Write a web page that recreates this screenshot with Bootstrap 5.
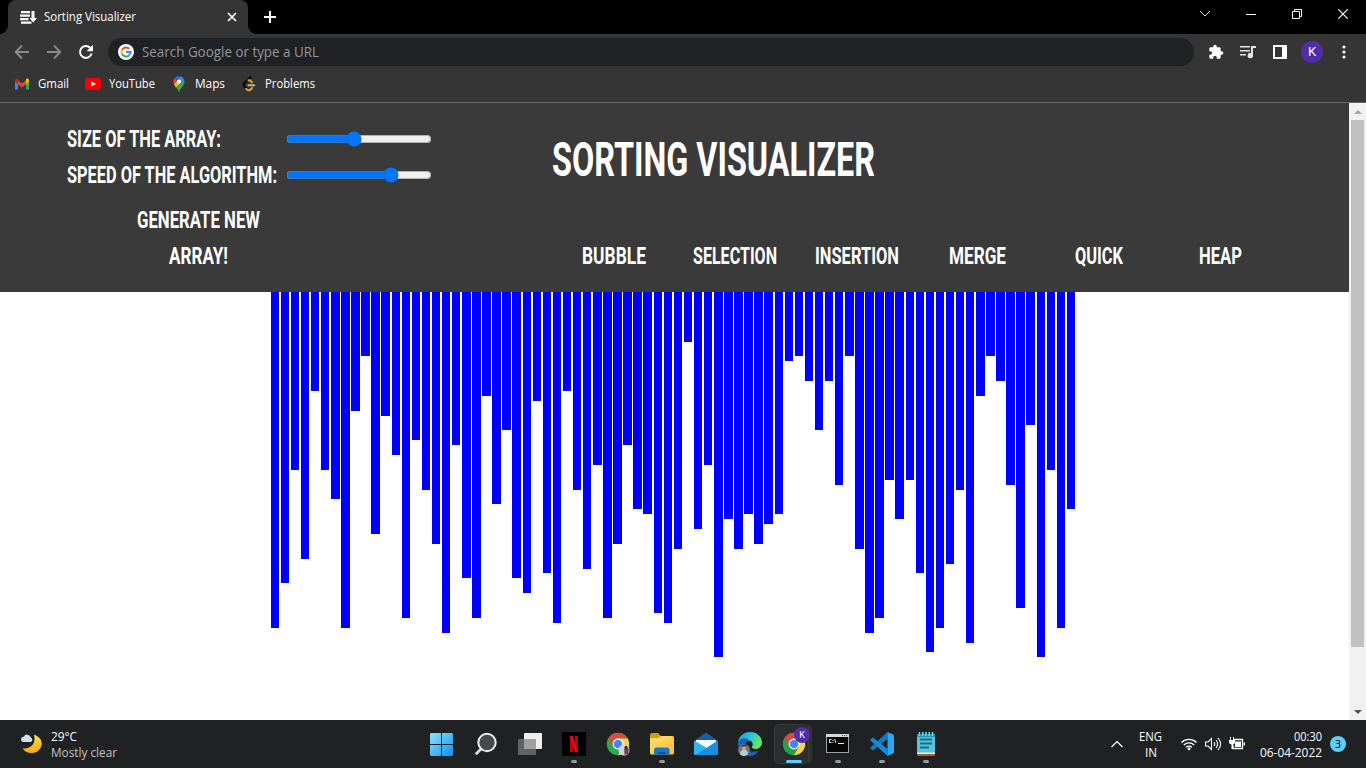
<!DOCTYPE html>
<html lang="en">
<head>
<meta charset="utf-8">
<title>Sorting Visualizer</title>
<link href="https://cdn.jsdelivr.net/npm/bootstrap@5.3.0/dist/css/bootstrap.min.css" rel="stylesheet">
<style>
  body { width: 1366px; height: 768px; overflow: hidden; font-family: "Open Sans", "Noto Sans", sans-serif; font-size: 12px; line-height: 16px; color: #fff; }
  svg { display: block; flex: none; }
  .fit { display: inline-block; white-space: nowrap; transform-origin: 0 50%; }
  .titlebar { height: 34px; background: #000; }
  .browser-tab { width: 240px; height: 34px; margin-left: 8px; padding: 0 11px 0 12px; background: #353535; border-radius: 8px 8px 0 0; }
  .browser-tab::before, .browser-tab::after { content: ""; position: absolute; bottom: 0; width: 8px; height: 8px; }
  .browser-tab::before { left: -8px; background: radial-gradient(circle at 0 0, #000 7.5px, #353535 8px); }
  .browser-tab::after { right: -8px; background: radial-gradient(circle at 100% 0, #000 7.5px, #353535 8px); }
  .tab-name { padding-left: 7px; }
  .win-btn { width: 46px; height: 28px; }
  .toolbar { height: 36px; background: #353535; padding: 0 6px; }
  .tool { width: 32px; height: 32px; }
  .omnibox { height: 28px; border-radius: 14px; background: #202124; margin: 0 6px; padding-left: 10px; color: #93979b; font-size: 14px; line-height: 20px; }
  .bookmarks { height: 33px; background: #353535; border-bottom: 1px solid #676767; padding: 0 0 4px 14px; gap: 16px; }
  .bookmark svg { margin-right: 8px; }
  .avatar { width: 22px; height: 22px; background: #512da8; font-family: Roboto, sans-serif; font-size: 13px; }
  .viewport { height: 617px; background: #fff; }
  .page-head { height: 189px; background: #3a3a3a; font-family: Roboto, sans-serif; font-weight: 700; font-size: 24.5px; line-height: 36px; }
  .controls { width: 552px; padding: 18px 0 0 66.5px; }
  .controls .fit, .algos .fit { translate: 0 -.4px; }
  .control-label { width: 219.5px; }
  .controls input { width: 146px; height: 16px; margin: 0; }
  .generate { width: 263px; margin-top: 9px; }
  .page-title { font-size: 48px; line-height: 60px; font-weight: 700; margin: 27px 0 0; }
  .algos { margin-top: 48px; padding-left: 1px; }
  .algo { width: 121.41px; }
  .bars { gap: 1.609375px; padding-left: 270.59375px; }
  .bar-item { flex: none; width: 8.46875px; background: #00f; }
  .scroller { width: 17px; background: #f1f1f1; }
  .thumb { width: 13px; height: 527px; background: #c1c1c1; }
  .arrow-cell { height: 17px; }
  .taskbar { height: 48px; background: #202122; }
  .taskbar .fit { translate: 0 1px; }
  .weather { width: 420px; padding-left: 20px; }
  .weather-text { margin-left: 7px; }
  .soft { color: #c4c4c4; }
  .app { width: 44px; height: 48px; }
  .app::after { content: ""; position: absolute; left: 19px; top: 40px; width: 6px; height: 3px; border-radius: 2px; background: transparent; }
  .app.running::after { background: #9b9b9b; }
  .app.active::after { left: 14px; width: 16px; background: #60cdff; }
  .app.active::before { content: ""; position: absolute; left: 2px; top: 4px; width: 35px; height: 40px; border-radius: 5px; background: #2c2d2e; border: 1px solid #393a3b; box-shadow: 4px 0 0 -1px #303132; }
  .app svg { position: relative; z-index: 1; }
  .app-badge { z-index: 2; left: 22px; top: 7px; width: 16px; height: 16px; background: #512da8; font: 9px/16px Roboto, sans-serif; text-align: center; }
  .tray { padding-right: 20px; }
  .lang { margin: 0 19px 0 16px; }
  .clock { margin: 0 8px 0 15px; }
  .note-count { width: 16px; height: 16px; background: #60cdff; color: #000; font-size: 10.5px; }
</style>
</head>
<body class="d-flex flex-column">

<div class="titlebar d-flex align-items-start">
  <div class="browser-tab d-flex align-items-center position-relative">
    <svg width="17" height="15" viewBox="0 0 17 15" fill="#fff"><path d="M1 1h9v2.300H1zM0 4.500h10v2.300H0zM0 8h8.500v2.300H0zM1 11.500h10.500v2.300H1zM11.500 1h3v7H17l-3.800 4.500L9.500 8h2z"/></svg>
    <span class="tab-name"><span class="fit" data-w="92">Sorting Visualizer</span></span>
    <svg class="ms-auto" width="10" height="10" viewBox="0 0 10 10" stroke="#fff" stroke-width="1.700"><path d="M1 1l8 8M9 1L1 9"/></svg>
  </div>
  <svg class="ms-3 mt-1" width="12" height="26" viewBox="0 0 12 26" stroke="#fff" stroke-width="2"><path d="M6 7v12M0 13h12"/></svg>
  <div class="d-flex ms-auto">
    <div class="win-btn d-flex align-items-center justify-content-center"><svg width="12" height="8" viewBox="0 0 12 8" fill="none" stroke="#ddd"><path d="M1 1l5 5 5-5"/></svg></div>
    <div class="win-btn d-flex align-items-center justify-content-center"><svg width="10" height="10" viewBox="0 0 10 10" stroke="#fff"><path d="M0 5.500h10"/></svg></div>
    <div class="win-btn d-flex align-items-center justify-content-center"><svg width="10" height="10" viewBox="0 0 10 10" fill="none" stroke="#fff"><path d="M.5 2.500h7v7h-7zM2.500 2.500v-2h7v7h-2"/></svg></div>
    <div class="win-btn d-flex align-items-center justify-content-center"><svg width="10" height="10" viewBox="0 0 10 10" stroke="#fff" stroke-width="1.200"><path d="M.3.3l9.400 9.400M9.700.3L.3 9.700"/></svg></div>
  </div>
</div>

<div class="toolbar d-flex align-items-center">
  <div class="tool d-flex align-items-center justify-content-center"><svg width="16" height="16" viewBox="0 0 16 16" fill="none" stroke="#8b8b8b" stroke-width="1.800"><path d="M15 8H2M8 1.500L1.700 8 8 14.500"/></svg></div>
  <div class="tool d-flex align-items-center justify-content-center"><svg width="16" height="16" viewBox="0 0 16 16" fill="none" stroke="#8b8b8b" stroke-width="1.800"><path d="M1 8h13M8 1.500L14.300 8 8 14.500"/></svg></div>
  <div class="tool d-flex align-items-center justify-content-center"><svg width="16" height="16" viewBox="0 0 16 16"><path d="M13.600 9.500A5.900 5.900 0 1 1 12.300 4" fill="none" stroke="#fff" stroke-width="2"/><path d="M15 .8v6.400H8.600z" fill="#fff"/></svg></div>
  <div class="omnibox d-flex align-items-center flex-grow-1">
    <svg class="me-2" width="16" height="16" viewBox="0 0 16 16"><circle cx="8" cy="8" r="8" fill="#fff"/><g fill="none" stroke-width="2"><path d="M11.200 4.800A4.600 4.600 0 0 0 4 5.900" stroke="#ea4335"/><path d="M4 5.900a4.600 4.600 0 0 0 0 4.200" stroke="#fbbc05"/><path d="M4 10.100a4.600 4.600 0 0 0 7 1.300" stroke="#34a853"/><path d="M11 11.400A4.500 4.500 0 0 0 12.600 8H8" stroke="#4285f4"/></g></svg>
    <span class="fit" data-w="177">Search Google or type a URL</span>
  </div>
  <div class="tool d-flex align-items-center justify-content-center"><svg width="16" height="16" viewBox="0 0 24 24" fill="#fff"><path d="M20.500 11H19V7c0-1.100-.9-2-2-2h-4V3.500a2.500 2.500 0 0 0-5 0V5H4c-1.100 0-2 .9-2 2v3.800h1.500a2.700 2.700 0 0 1 0 5.400H2V20c0 1.100.9 2 2 2h3.800v-1.500a2.700 2.700 0 0 1 5.400 0V22H17c1.100 0 2-.9 2-2v-4h1.500a2.500 2.500 0 0 0 0-5z"/></svg></div>
  <div class="tool d-flex align-items-center justify-content-center"><svg width="18" height="14" viewBox="0 0 18 14" fill="#e4e4e4"><path d="M1 1h10v1.600H1zM1 5h10v1.600H1zM1 9h6v1.600H1zM12 1h5v2h-3v7.500a2.700 2.700 0 1 1-2-2.500z"/></svg></div>
  <div class="tool d-flex align-items-center justify-content-center"><svg width="14" height="14" viewBox="0 0 14 14" fill="#fff" fill-rule="evenodd"><path d="M0 0h14v14H0zM2 2v10h7V2z"/></svg></div>
  <div class="tool d-flex align-items-center justify-content-center"><div class="avatar rounded-circle d-flex align-items-center justify-content-center">K</div></div>
  <div class="tool d-flex align-items-center justify-content-center"><svg width="4" height="14" viewBox="0 0 4 14" fill="#fff"><circle cx="2" cy="2" r="1.600"/><circle cx="2" cy="7" r="1.600"/><circle cx="2" cy="12" r="1.600"/></svg></div>
</div>

<div class="bookmarks d-flex align-items-center">
  <div class="bookmark d-flex align-items-center"><svg width="16" height="12" viewBox="0 0 16 12"><path d="M1 2v9.500h3V5z" fill="#4285f4"/><path d="M15 2v9.500h-3V5z" fill="#34a853"/><path d="M4 2.300l4 3.200 4-3.200v4L8 9.500 4 6.300z" fill="#ea4335"/><path d="M1 2.500C1 .6 2.800 0 4 1v5.300L1 4z" fill="#c5221f"/><path d="M15 2.500C15 .6 13.200 0 12 1v5.300L15 4z" fill="#fbbc04"/></svg><span class="fit" data-w="31">Gmail</span></div>
  <div class="bookmark d-flex align-items-center"><svg width="16" height="12" viewBox="0 0 16 12"><rect width="16" height="12" rx="3" fill="#f00"/><path d="M6.300 3.400v5.200L11 6z" fill="#fff"/></svg><span class="fit" data-w="46">YouTube</span></div>
  <div class="bookmark d-flex align-items-center"><svg width="16" height="16" viewBox="0 0 16 16"><path d="M8 0a5.500 5.500 0 0 0-4.300 2L6 4l3.800-3.700A6 6 0 0 0 8 0z" fill="#1a73e8"/><path d="M3.700 2A5.400 5.400 0 0 0 3 8.200L6 5z" fill="#ea4335"/><path d="M9.800.3A5.500 5.500 0 0 1 13.200 4L5 12 3 8.200 6.500 4z" fill="#4285f4"/><path d="M3 8.200L5 11.500 10 6 8 4z" fill="#fbbc04"/><path d="M13.200 4c.6 2 .2 4-1 5.500C10 12.400 9 13 8.500 15.500c-.2.600-.8.600-1 0-.4-1.700-1-2.600-2.500-4z" fill="#34a853"/><circle cx="8" cy="5.500" r="2.100" fill="#fff"/></svg><span class="fit" data-w="30">Maps</span></div>
  <div class="bookmark d-flex align-items-center"><svg width="16" height="16" viewBox="0 0 16 16" fill="none" stroke-width="2" stroke-linecap="round"><path d="M6.500 13.500L3.200 10.300c-.8-.9-.8-2 0-2.900L9.500 1.200" stroke="#070706"/><path d="M7.500 4.300l1.500.2 2 1.700M5.300 12.900c1.300 1.800 3.600 1.600 4.700.3l1.200-1.300" stroke="#f2a12b"/><path d="M7.500 9.200h5.700" stroke="#b8b8b8"/></svg><span class="fit" data-w="50">Problems</span></div>
</div>

<div class="viewport d-flex">
  <main class="flex-grow-1">
    <header class="page-head d-flex">
      <div class="controls">
        <label class="d-flex align-items-center"><span class="control-label"><span class="fit" data-w="154">SIZE OF THE ARRAY:</span></span><input type="range" min="0" max="1000" value="461"></label>
        <label class="d-flex align-items-center"><span class="control-label"><span class="fit" data-w="210">SPEED OF THE ALGORITHM:</span></span><input type="range" min="0" max="1000" value="746"></label>
        <div class="generate d-flex flex-column align-items-center"><span class="fit" data-w="123">GENERATE NEW</span><span class="fit" data-w="59">ARRAY!</span></div>
      </div>
      <div>
        <h1 class="page-title"><span class="fit" data-w="323">SORTING VISUALIZER</span></h1>
        <nav class="algos d-flex text-center">
          <div class="algo"><span class="fit" data-w="64">BUBBLE</span></div>
          <div class="algo"><span class="fit" data-w="84">SELECTION</span></div>
          <div class="algo"><span class="fit" data-w="84">INSERTION</span></div>
          <div class="algo"><span class="fit" data-w="57">MERGE</span></div>
          <div class="algo"><span class="fit" data-w="48">QUICK</span></div>
          <div class="algo"><span class="fit" data-w="43">HEAP</span></div>
        </nav>
      </div>
    </header>
    <div class="bars d-flex align-items-start" id="bars"></div>
  </main>
  <div class="scroller d-flex flex-column align-items-center">
    <div class="arrow-cell d-flex align-items-center"><svg width="8" height="4" viewBox="0 0 8 4" fill="#a3a3a3"><path d="M0 4l4-4 4 4z"/></svg></div>
    <div class="thumb"></div>
    <div class="arrow-cell d-flex align-items-center mt-auto"><svg width="8" height="4" viewBox="0 0 8 4" fill="#505050"><path d="M0 0l4 4 4-4z"/></svg></div>
  </div>
</div>

<footer class="taskbar d-flex align-items-center">
  <div class="weather d-flex align-items-center">
    <svg width="24" height="24" viewBox="0 0 24 24"><defs><linearGradient id="moon" x1="0" y1="0" x2="0" y2="1"><stop offset="0" stop-color="#ffe14a"/><stop offset="1" stop-color="#f9a818"/></linearGradient></defs><path d="M14 2.500c9 3 10 12 4 16.500-5 3.500-12 2.500-15.500-2.500 8 1 14-5 11.500-14z" fill="url(#moon)"/><path d="M3.500 10a2.600 2.600 0 0 1 .3-5.200 3.700 3.700 0 0 1 7 .8A2.300 2.300 0 0 1 10.500 10z" fill="#d5e3f0"/></svg>
    <div class="weather-text d-flex flex-column align-items-start"><span class="fit" data-w="26">29°C</span><span class="fit soft" data-w="66">Mostly clear</span></div>
  </div>

  <div class="app position-relative d-flex align-items-center justify-content-center"><svg width="24" height="24" viewBox="0 0 24 24"><defs><linearGradient id="win" x1="0" y1="0" x2="1" y2="1"><stop offset="0" stop-color="#8fe2ff"/><stop offset="1" stop-color="#0a92ef"/></linearGradient></defs><path d="M1 1h10v11H0V2zM12 1h10l1 1v10H12zM0 13h11v11H1l-1-1zM12 13h11v10l-1 1H12z" fill="url(#win)"/></svg></div>
  <div class="app position-relative d-flex align-items-center justify-content-center"><svg width="24" height="24" viewBox="0 0 24 24"><path d="M7.500 16.500L2.500 21.500" stroke="#ddd" stroke-width="2.800" stroke-linecap="round"/><circle cx="13" cy="10.500" r="8.700" fill="#47494b" stroke="#f0f0f0" stroke-width="2"/></svg></div>
  <div class="app position-relative d-flex align-items-center justify-content-center"><svg width="24" height="24" viewBox="0 0 24 24"><rect x="6" y="1" width="18" height="16" rx="1" fill="#eee"/><rect x="0" y="7" width="18" height="16" rx="1" fill="#626262"/><path d="M6 7h12v10H6z" fill="#a0a0a0"/></svg></div>
  <div class="app running position-relative d-flex align-items-center justify-content-center"><svg width="24" height="24" viewBox="0 0 24 24"><path d="M0 0h24v24H0z" fill="#000"/><path d="M8 4h3v16l-3 .4zM13 4h3v16.400l-3-.4z" fill="#b20710"/><path d="M8 4h3l5 16.400-3-.4z" fill="#e50914"/></svg></div>
  <div class="app position-relative d-flex align-items-center justify-content-center"><svg width="24" height="24" viewBox="0 0 24 24"><circle cx="12" cy="12" r="11.200" fill="#2da94f"/><path d="M12 .8A11.200 11.200 0 0 0 2.300 6.400L7.200 14.800 12 6.500h9.700A11.200 11.200 0 0 0 12 .8z" fill="#d94a3f"/><path d="M21.700 6.500H12l4.900 8.300-4.900 8.400a11.200 11.200 0 0 0 9.700-16.700z" fill="#fbcf4b"/><circle cx="12" cy="12" r="5.400" fill="#fff"/><circle cx="12" cy="12" r="4.300" fill="#4285f4"/><circle cx="18" cy="18" r="5.500" fill="#cfdadb"/><path d="M18.500 23c0-4-1-6 1-8l3.500 2-1 5z" fill="#7a3c42"/><circle cx="20" cy="15.300" r="1.500" fill="#292225"/></svg></div>
  <div class="app running position-relative d-flex align-items-center justify-content-center"><svg width="24" height="24" viewBox="0 0 24 24"><defs><linearGradient id="folder" x1="0" y1="0" x2="1" y2="1"><stop offset="0" stop-color="#ffe075"/><stop offset="1" stop-color="#fcbd2e"/></linearGradient></defs><path d="M0 3q0-2 2-2h6l3 3h11q2 0 2 2v4H0z" fill="#d69b0f"/><path d="M0 6h8l3-2h11q2 0 2 2v15q0 1.500-1.500 1.500h-21Q0 22.500 0 21z" fill="url(#folder)"/><path d="M4 22.500V18q0-2.500 2.500-2.500h10.500q2.500 0 2.500 2.500v4.500z" fill="#1478ca"/><path d="M8 20h8v2.500H8z" fill="#0b5aa5"/></svg></div>
  <div class="app position-relative d-flex align-items-center justify-content-center"><svg width="24" height="24" viewBox="0 0 24 24"><path d="M0 9L12 .5 24 9v5H0z" fill="#1260ad"/><path d="M2 8h20v9H2z" fill="#f4f6f8"/><path d="M0 8.500l13 7.500L24 8.500V22q0 1-1 1H1q-1 0-1-1z" fill="#2fb7f0"/><path d="M24 8.500L11 17 1 23h22q1 0 1-1z" fill="#1690de"/></svg></div>
  <div class="app position-relative d-flex align-items-center justify-content-center"><svg width="24" height="24" viewBox="0 0 24 24"><defs><linearGradient id="edge" x1="0" y1="0" x2="1" y2=".4"><stop offset="0" stop-color="#1d9be9"/><stop offset=".55" stop-color="#2cc4d8"/><stop offset="1" stop-color="#6be557"/></linearGradient></defs><path d="M0 10C1 4 6 0 12 0c7 0 12 5 12 10.500 0 4-3 6.500-6.500 6.500-2.500 0-4-1-3.500-2.500 1.500-1.500 1-6-3.500-6C6 8.500 3 12 3 16 1 14 0 12.500 0 10z" fill="url(#edge)"/><path d="M0 10c2-4 8-5 11.500-1.500C8 9 7 12 8 15c1.500 4.500 7 6 13 3.500-2 3.500-5.500 5.500-9 5.500C5 24 0 18 0 10z" fill="#1564b8"/><circle cx="6" cy="18" r="6" fill="#70747a"/><circle cx="6" cy="15.800" r="2.200" fill="#c69b86"/><path d="M2 22c0-6 8-6 8 0-2 2.500-6 2.500-8 0z" fill="#b9cbd4"/><path d="M3.800 15c0-3 4.600-3 4.600 0l-2-1z" fill="#262327"/></svg></div>
  <div class="app active position-relative d-flex align-items-center justify-content-center"><svg width="24" height="24" viewBox="0 0 24 24"><circle cx="12" cy="12" r="11.200" fill="#1fa24a"/><path d="M12 .8A11.200 11.200 0 0 0 2.300 6.400L7.200 14.800 12 6.500h9.700A11.200 11.200 0 0 0 12 .8z" fill="#e0483c"/><path d="M21.700 6.500H12l4.900 8.300-4.900 8.400a11.200 11.200 0 0 0 9.700-16.700z" fill="#fdd246"/><circle cx="12" cy="12" r="5.400" fill="#fff"/><circle cx="12" cy="12" r="4.300" fill="#4285f4"/></svg><span class="app-badge position-absolute rounded-circle">K</span></div>
  <div class="app running position-relative d-flex align-items-center justify-content-center"><svg width="24" height="24" viewBox="0 0 24 24"><path d="M0 2h23v19H0z" fill="#9fa1a3"/><path d="M1 5h21v15H1z" fill="#060606"/><path d="M0 2h23v3H0z" fill="#d8d8d8"/><path d="M16 3h1v1h-1zM18 3h1v1h-1zM20 3h1v1h-1z" fill="#555"/><path d="M5.500 7.500H3.500v3h2M7 8v1M7 10v1M8.500 7l1.500 4M12 11.500h6" fill="none" stroke="#eee"/></svg></div>
  <div class="app running position-relative d-flex align-items-center justify-content-center"><svg width="24" height="24" viewBox="0 0 24 24"><path d="M17.500 0v7L3 18.500 0 16z" fill="#1079c0"/><path d="M0 8l3-2.500L17.500 17v7z" fill="#168ad5"/><path d="M17.500 0L24 3v18l-6.500 3z" fill="#2aa7f3"/></svg></div>
  <div class="app running position-relative d-flex align-items-center justify-content-center"><svg width="24" height="24" viewBox="0 0 24 24"><path d="M3 21h18v2q0 1-1 1H4q-1 0-1-1z" fill="#b35c1e"/><path d="M3 20h18v2H3z" fill="#e9eff1"/><path d="M3 2h18v18.500H3z" fill="#58c4dc"/><path d="M3 2h18v3H3z" fill="#2b91ad"/><path d="M5.500 0v4M8.800 0v4M12 0v4M15.200 0v4M18.500 0v4" stroke="#75d9ec" stroke-width="1.500"/><path d="M6 7.500h12M6 11.500h12M6 15.500h9" stroke="#146e87" stroke-width="1.800"/></svg></div>

  <div class="tray d-flex align-items-center ms-auto">
    <svg width="12" height="8" viewBox="0 0 12 8" fill="none" stroke="#fff" stroke-width="1.200"><path d="M.5 7L6 1.500 11.500 7"/></svg>
    <div class="lang d-flex flex-column align-items-center"><span class="fit" data-w="23">ENG</span><span class="fit" data-w="12">IN</span></div>
    <svg width="16" height="14" viewBox="0 0 16 14" fill="none" stroke="#fff" stroke-width="1.200"><path d="M.5 5.500a10.600 10.600 0 0 1 15 0M2.800 8a7.300 7.300 0 0 1 10.400 0M5 10.300a4.200 4.200 0 0 1 6 0"/><circle cx="8" cy="11.800" r="1.500" fill="#fff" stroke="none"/></svg>
    <svg class="ms-2" width="17" height="14" viewBox="0 0 17 14" fill="none" stroke="#fff" stroke-width="1.100"><path d="M.5 5v4H3l3.500 3.500v-11L3 5zM9 5q1.500 2 0 4M11 3q3.200 4 0 8M13 1q5.300 6 0 12"/></svg>
    <svg style="margin-left:7px" width="16" height="14" viewBox="1 0 16 14"><path d="M5.500 2.500h9v9H5V8" fill="none" stroke="#fff" stroke-width="1.300"/><path d="M7 4.500h6v5.500H7zM15.500 5.500H17v3h-1.500zM1 3h6v2q0 2-2 2.500V12H3.500V7.500Q1 7 1 5zM2 0h1v3H2zM5 0h1v3H5z" fill="#fff"/></svg>
    <div class="clock d-flex flex-column align-items-end"><span class="fit" data-w="28">00:30</span><span class="fit" data-w="62">06-04-2022</span></div>
    <div class="note-count rounded-circle d-flex align-items-center justify-content-center">3</div>
  </div>
</footer>

<script src="https://cdn.jsdelivr.net/npm/bootstrap@5.3.0/dist/js/bootstrap.bundle.min.js"></script>
<script>
  // Array values, one bar each; the bars hang from the header.
  const values = [336,291,178,267,99,178,207,336,119,64,242,124,163,326,148,198,252,341,153,286,
    326,104,212,138,286,301,109,281,331,99,198,277,173,326,252,153,217,222,321,331,
    257,50,237,173,365,227,257,222,252,232,222,69,64,89,138,89,193,64,257,341,
    326,188,227,188,281,360,336,272,198,351,104,64,89,193,316,133,365,178,336,217];
  const bars = document.getElementById('bars');
  for (const v of values) {
    const bar = document.createElement('div');
    bar.className = 'bar-item';
    bar.style.height = v + 'px';
    bars.append(bar);
  }
  // Condense each label to its design width while keeping it in the flow.
  for (const el of document.querySelectorAll('.fit')) {
    const natural = el.getBoundingClientRect().width, w = +el.dataset.w;
    el.style.width = natural + 'px';
    el.style.transform = `scaleX(${w / natural})`;
    el.style.marginRight = (w - natural) + 'px';
  }
</script>
</body>
</html>
